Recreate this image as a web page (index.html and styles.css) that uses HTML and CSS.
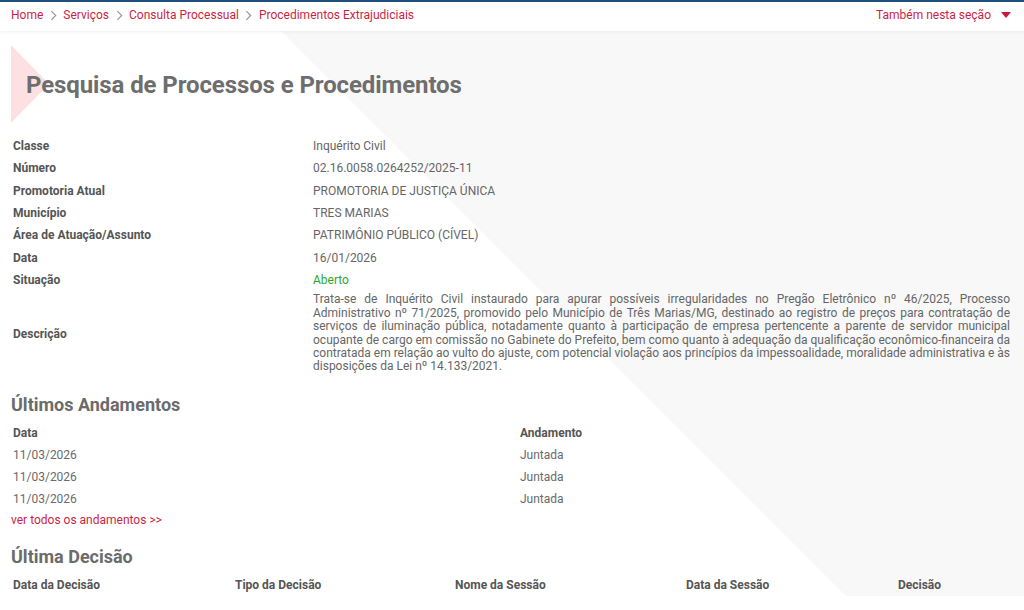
FILE: index.html
```html
<!DOCTYPE html>
<html lang="pt-BR">
<head>
<meta charset="utf-8">
<title>Pesquisa de Processos e Procedimentos</title>
<link rel="stylesheet" href="styles.css">
</head>
<body>
<header class="topbar">
  <nav class="crumbs">
    <a href="#">Home</a>
    <span class="sep"><svg viewBox="0 0 8 12" width="7" height="11"><path d="M1.5 1l5 5-5 5" fill="none" stroke="#9a9a9a" stroke-width="1.4"/></svg></span>
    <a href="#">Serviços</a>
    <span class="sep"><svg viewBox="0 0 8 12" width="7" height="11"><path d="M1.5 1l5 5-5 5" fill="none" stroke="#9a9a9a" stroke-width="1.4"/></svg></span>
    <a href="#">Consulta Processual</a>
    <span class="sep"><svg viewBox="0 0 8 12" width="7" height="11"><path d="M1.5 1l5 5-5 5" fill="none" stroke="#9a9a9a" stroke-width="1.4"/></svg></span>
    <a href="#">Procedimentos Extrajudiciais</a>
  </nav>
  <a href="#" class="section-menu">Também nesta seção <svg viewBox="0 0 10 6" width="10" height="6"><path d="M0 0h10L5 6z" fill="#c8183c"/></svg></a>
</header>

<main class="page">
  <div class="title-block">
    <h1>Pesquisa de Processos e Procedimentos</h1>
  </div>

  <table class="info">
    <tbody>
      <tr><th>Classe</th><td>Inquérito Civil</td></tr>
      <tr><th>Número</th><td>02.16.0058.0264252/2025-11</td></tr>
      <tr><th>Promotoria Atual</th><td>PROMOTORIA DE JUSTIÇA ÚNICA</td></tr>
      <tr><th>Município</th><td>TRES MARIAS</td></tr>
      <tr><th>Área de Atuação/Assunto</th><td>PATRIMÔNIO PÚBLICO (CÍVEL)</td></tr>
      <tr><th>Data</th><td>16/01/2026</td></tr>
      <tr><th>Situação</th><td class="status-open">Aberto</td></tr>
      <tr class="desc-row"><th>Descrição</th><td class="desc">Trata-se de Inquérito Civil instaurado para apurar possíveis irregularidades no Pregão Eletrônico nº 46/2025, Processo Administrativo nº 71/2025, promovido pelo Município de Três Marias/MG, destinado ao registro de preços para contratação de serviços de iluminação pública, notadamente quanto à participação de empresa pertencente a parente de servidor municipal ocupante de cargo em comissão no Gabinete do Prefeito, bem como quanto à adequação da qualificação econômico-financeira da contratada em relação ao vulto do ajuste, com potencial violação aos princípios da impessoalidade, moralidade administrativa e às disposições da Lei nº 14.133/2021.</td></tr>
    </tbody>
  </table>

  <section class="block">
    <h2>Últimos Andamentos</h2>
    <table class="list moves">
      <thead><tr><th>Data</th><th>Andamento</th></tr></thead>
      <tbody>
        <tr><td>11/03/2026</td><td>Juntada</td></tr>
        <tr><td>11/03/2026</td><td>Juntada</td></tr>
        <tr><td>11/03/2026</td><td>Juntada</td></tr>
      </tbody>
    </table>
    <a href="#" class="more">ver todos os andamentos &gt;&gt;</a>
  </section>

  <section class="block decision">
    <h2>Última Decisão</h2>
    <table class="list decisions">
      <thead><tr><th>Data da Decisão</th><th>Tipo da Decisão</th><th>Nome da Sessão</th><th>Data da Sessão</th><th>Decisão</th></tr></thead>
    </table>
  </section>
</main>
</body>
</html>
```

FILE: styles.css
```css
* { box-sizing: border-box; }

html, body {
  margin: 0;
  height: 100%;
  overflow: hidden;
  background: #fff;
  font-family: Roboto, "Liberation Sans", Arial, sans-serif;
  color: #666;
}

a { text-decoration: none; }

/* top bar with breadcrumb */
.topbar {
  position: relative;
  z-index: 2;
  height: 31px;
  border-top: 2px solid #1f4f7d;
  background: #fff;
  box-shadow: 0 1px 3px rgba(0, 0, 0, 0.06);
  display: flex;
  align-items: center;
  justify-content: space-between;
  padding: 0 13px 3px 11px;
  font-size: 12px;
}

.crumbs {
  display: flex;
  align-items: center;
  gap: 6.5px;
}

.crumbs a,
.section-menu { color: #cc1f44; }

.sep { display: flex; align-items: center; }

.section-menu {
  display: flex;
  align-items: center;
  gap: 10px;
}

/* page body with the diagonal grey panel behind it */
.page {
  position: relative;
  isolation: isolate;
  padding: 14px 11px 0;
  font-size: 12px;
}

.page::before {
  content: "";
  position: absolute;
  inset: 0;
  background: #f8f8f8;
  clip-path: polygon(281px 0, 2000px 0, 2000px 1719px);
  z-index: -1;
}

.title-block {
  position: relative;
  height: 78px;
  display: flex;
  align-items: center;
  padding-left: 15px;
}

.title-block::before {
  content: "";
  position: absolute;
  left: 0;
  top: 0;
  width: 38px;
  height: 78px;
  background: #fde1e2;
  clip-path: polygon(0 0, 100% 50%, 0 100%);
}

h1 {
  position: relative;
  margin: 2px 0 0;
  font-size: 24px;
  font-weight: 700;
  color: #6e6e6e;
  letter-spacing: -0.1px;
}

/* process details */
.info {
  border-collapse: collapse;
  margin-top: 12px;
  width: 1001px;
}

.info th,
.info td {
  padding: 0 2px;
  height: 22.33px;
  line-height: 14px;
  text-align: left;
  vertical-align: middle;
}

.info th {
  width: 300px;
  font-weight: 700;
  color: #555;
}

.info td { color: #666; }

.info .status-open { color: #2fa52f; }

.info .desc-row td {
  padding-top: 2px;
  padding-bottom: 2px;
}

.info .desc {
  text-align: justify;
  line-height: 13.4px;
}

/* lists */
.block h2 {
  margin: 0;
  font-size: 18px;
  font-weight: 700;
  line-height: 22px;
  color: #6b6b6b;
}

.block { margin-top: 18px; }

.list {
  border-collapse: collapse;
  margin-top: 6px;
  width: 1014px;
}

.list th,
.list td {
  padding: 0 2px;
  height: 22px;
  text-align: left;
  vertical-align: middle;
}

.list th { font-weight: 700; color: #555; }
.list td { color: #6a6a6a; }

.moves { margin-top: 6.5px; }
.moves th:first-child { width: 507px; }

.more {
  display: block;
  color: #cc1f44;
  line-height: 20px;
  margin-top: 0;
}

.decision { margin-top: 16px; }

.decisions { table-layout: fixed; }
.decisions th:nth-child(1) { width: 222px; }
.decisions th:nth-child(2) { width: 220px; }
.decisions th:nth-child(3) { width: 231px; }
.decisions th:nth-child(4) { width: 212px; }
```
